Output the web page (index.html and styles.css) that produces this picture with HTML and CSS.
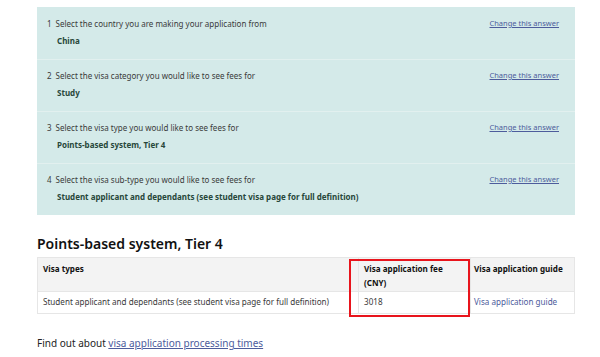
FILE: index.html
```html
<!DOCTYPE html>
<html>
<head>
<meta charset="utf-8">
<link rel="stylesheet" href="styles.css">
</head>
<body>
<div class="page">
  <div class="answers">
    <div class="row">
      <div class="qline">
        <span class="q"><span class="num">1</span>Select the country you are making your application from</span>
        <a class="change" href="#">Change this answer</a>
      </div>
      <div class="ans">China</div>
    </div>
    <div class="row">
      <div class="qline">
        <span class="q"><span class="num">2</span>Select the visa category you would like to see fees for</span>
        <a class="change" href="#">Change this answer</a>
      </div>
      <div class="ans">Study</div>
    </div>
    <div class="row">
      <div class="qline">
        <span class="q"><span class="num">3</span>Select the visa type you would like to see fees for</span>
        <a class="change" href="#">Change this answer</a>
      </div>
      <div class="ans">Points-based system, Tier 4</div>
    </div>
    <div class="row">
      <div class="qline">
        <span class="q"><span class="num">4</span>Select the visa sub-type you would like to see fees for</span>
        <a class="change" href="#">Change this answer</a>
      </div>
      <div class="ans">Student applicant and dependants (see student visa page for full definition)</div>
    </div>
  </div>

  <h2 class="title">Points-based system, Tier 4</h2>

  <div class="tablewrap">
    <table class="fees">
      <thead>
        <tr>
          <th class="c1">Visa types</th>
          <th class="c2">Visa application fee<br>(CNY)</th>
          <th class="c3">Visa application guide</th>
        </tr>
      </thead>
      <tbody>
        <tr>
          <td class="c1">Student applicant and dependants (see student visa page for full definition)</td>
          <td class="c2">3018</td>
          <td class="c3"><a href="#">Visa application guide</a></td>
        </tr>
      </tbody>
    </table>
    <div class="highlight"></div>
  </div>

  <p class="find">Find out about <a href="#">visa application processing times</a></p>
</div>
</body>
</html>
```
FILE: styles.css
```css
* { box-sizing: border-box; }
html, body { margin: 0; padding: 0; background: #fff; }
body { font-family: "Noto Sans", "Liberation Sans", sans-serif; color: #333; }
.page { padding: 7px 25px 0 37px; }
.answers { width: 538px; background: #d4eae9; }
.row { height: 52px; padding: 10px 16px 0 10px; border-top: 1px solid #e2f0ef; }
.row:first-child { border-top: none; padding-top: 11px; }
.qline { display: flex; justify-content: space-between; align-items: center; font-size: 8px; line-height: 11px; }
.num { margin-right: 4px; }
.q { color: #3a3a3a; }
.change { color: #4d5c9c; font-size: 7.5px; }
.ans { margin: 6px 0 0 10px; font-size: 8px; font-weight: 700; color: #27473a; line-height: 11px; }
.title { margin: 20px 0 0 0; font-size: 14px; font-weight: 600; color: #111; line-height: 18px; }
.tablewrap { position: relative; width: 538px; margin-top: 4px; }
.fees { width: 100%; border-collapse: collapse; font-size: 8.1px; line-height: 14px; }
.fees th, .fees td { text-align: left; vertical-align: top; border: 1px solid #e6e6e6; }
.fees th { background: #f3f3f3; font-weight: 700; color: #111; height: 34px; padding: 4px 5px 0; }
.fees td { height: 22px; padding: 3px 5px 0; color: #3a3a3a; }
.fees .c1 { width: 321px; }
.fees .c2 { width: 112px; }
.fees .c3 { padding-left: 3px; }
.fees a { color: #4d5c9c; text-decoration: none; }
.highlight { position: absolute; left: 312px; top: 2px; width: 121px; height: 58px; border: 2px solid #e8141c; }
.find { margin: 22px 0 0 0; font-size: 10px; color: #222; }
.find a { color: #4d5c9c; }
```
